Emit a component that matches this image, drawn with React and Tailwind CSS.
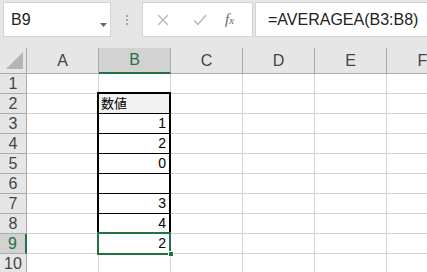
import React from "react";

const cols = ["A", "B", "C", "D", "E", "F"];
const data = { 2: "数値", 3: "1", 4: "2", 5: "0", 6: "", 7: "3", 8: "4", 9: "2" };

export default function App() {
  const rows = [1, 2, 3, 4, 5, 6, 7, 8, 9, 10];
  return (
    <div
      className="relative w-[427px] h-[272px] overflow-hidden bg-white"
      style={{ fontFamily: '"Liberation Sans", "Noto Sans CJK JP", sans-serif' }}
    >
      {/* toolbar */}
      <div className="flex h-[48px] items-start bg-[#e6e6e6] pt-[2px] pl-[3px]">
        <div className="relative flex h-[35px] w-[108px] shrink-0 items-center border border-[#d4d4d4] bg-white pl-[7px] text-[16px] text-[#222]">
          B9
          <svg className="absolute left-[96px] top-[20px]" width="7" height="4" viewBox="0 0 7 4">
            <path d="M0 0 L7 0 L3.5 4 Z" fill="#666" />
          </svg>
        </div>
        <div className="flex h-[35px] w-[31px] shrink-0 flex-col items-center justify-center gap-[2px]">
          <div className="h-[2px] w-[2px] bg-[#a8a8a8]" />
          <div className="h-[2px] w-[2px] bg-[#a8a8a8]" />
          <div className="h-[2px] w-[2px] bg-[#a8a8a8]" />
        </div>
        <div className="flex h-[35px] w-[111px] shrink-0 items-center border border-[#d4d4d4] bg-white">
          <svg className="ml-[14px]" width="12" height="12" viewBox="0 0 12 12">
            <path d="M1 1 L11 11 M11 1 L1 11" stroke="#b8b8b8" strokeWidth="1.3" />
          </svg>
          <svg className="ml-[24px]" width="14" height="12" viewBox="0 0 14 12">
            <path d="M1 6.5 L5 10.5 L13 1" stroke="#b8b8b8" strokeWidth="1.4" fill="none" />
          </svg>
          <span
            className="ml-[18px] text-[15px] italic text-[#666]"
            style={{ fontFamily: '"Liberation Serif", serif' }}
          >
            f<span className="text-[11px]">x</span>
          </span>
        </div>
        <div className="ml-[2px] flex h-[35px] flex-1 items-center border border-r-0 border-[#d4d4d4] bg-white pl-[12px] text-[16px] text-[#222]">
          =AVERAGEA(B3:B8)
        </div>
      </div>

      {/* column headers */}
      <div className="flex h-[26px] bg-[#e6e6e6]">
        <div className="relative w-[27px] shrink-0 border-r border-b border-[#ababab]">
          <svg className="absolute left-[6px] top-[4px]" width="17" height="17" viewBox="0 0 17 17">
            <path d="M17 0 L17 17 L0 17 Z" fill="#b4b4b4" />
          </svg>
        </div>
        {cols.map((c) => (
          <div
            key={c}
            className={
              c === "B"
                ? "flex w-[72px] shrink-0 items-center justify-center border-r border-b-2 border-r-[#ababab] border-b-[#217346] bg-[#d2d2d2] text-[16px] text-[#217346]"
                : "flex w-[72px] shrink-0 items-center justify-center border-r border-b border-[#ababab] text-[16px] text-[#444]"
            }
          >
            {c}
          </div>
        ))}
      </div>

      {/* rows */}
      {rows.map((r) => (
        <div key={r} className="flex h-[20px]">
          <div
            className={
              r === 9
                ? "flex w-[27px] shrink-0 items-center justify-center border-r-2 border-b border-r-[#217346] border-b-[#ababab] bg-[#d2d2d2] text-[16px] text-[#217346]"
                : "flex w-[27px] shrink-0 items-center justify-center border-r border-b border-[#ababab] bg-[#e6e6e6] text-[16px] text-[#444]"
            }
          >
            {r}
          </div>
          {cols.map((c) => {
            const isB = c === "B" && r >= 2 && r <= 9;
            const v = c === "B" ? data[r] : undefined;
            return (
              <div
                key={c}
                className={
                  isB
                    ? r === 2
                      ? "flex w-[72px] shrink-0 items-center border-r border-b border-r-[#d4d4d4] border-b-black bg-[#f2f2f2] pl-[2px] text-[13px] text-black"
                      : "flex w-[72px] shrink-0 items-center justify-end border-r border-b border-r-[#d4d4d4] border-b-black pr-[4px] text-[14px] text-black"
                    : "w-[72px] shrink-0 border-r border-b border-[#d4d4d4]"
                }
              >
                {v}
              </div>
            );
          })}
        </div>
      ))}

      {/* outline of B2:B8 */}
      <div className="pointer-events-none absolute left-[97px] top-[92px] h-[142px] w-[74px] border-2 border-black" />
      {/* selection B9 */}
      <div className="pointer-events-none absolute left-[97px] top-[232px] h-[23px] w-[74px] border-2 border-[#217346]" />
      <div className="pointer-events-none absolute left-[168px] top-[251px] h-[6px] w-[6px] border border-white bg-[#217346]" />
    </div>
  );
}
